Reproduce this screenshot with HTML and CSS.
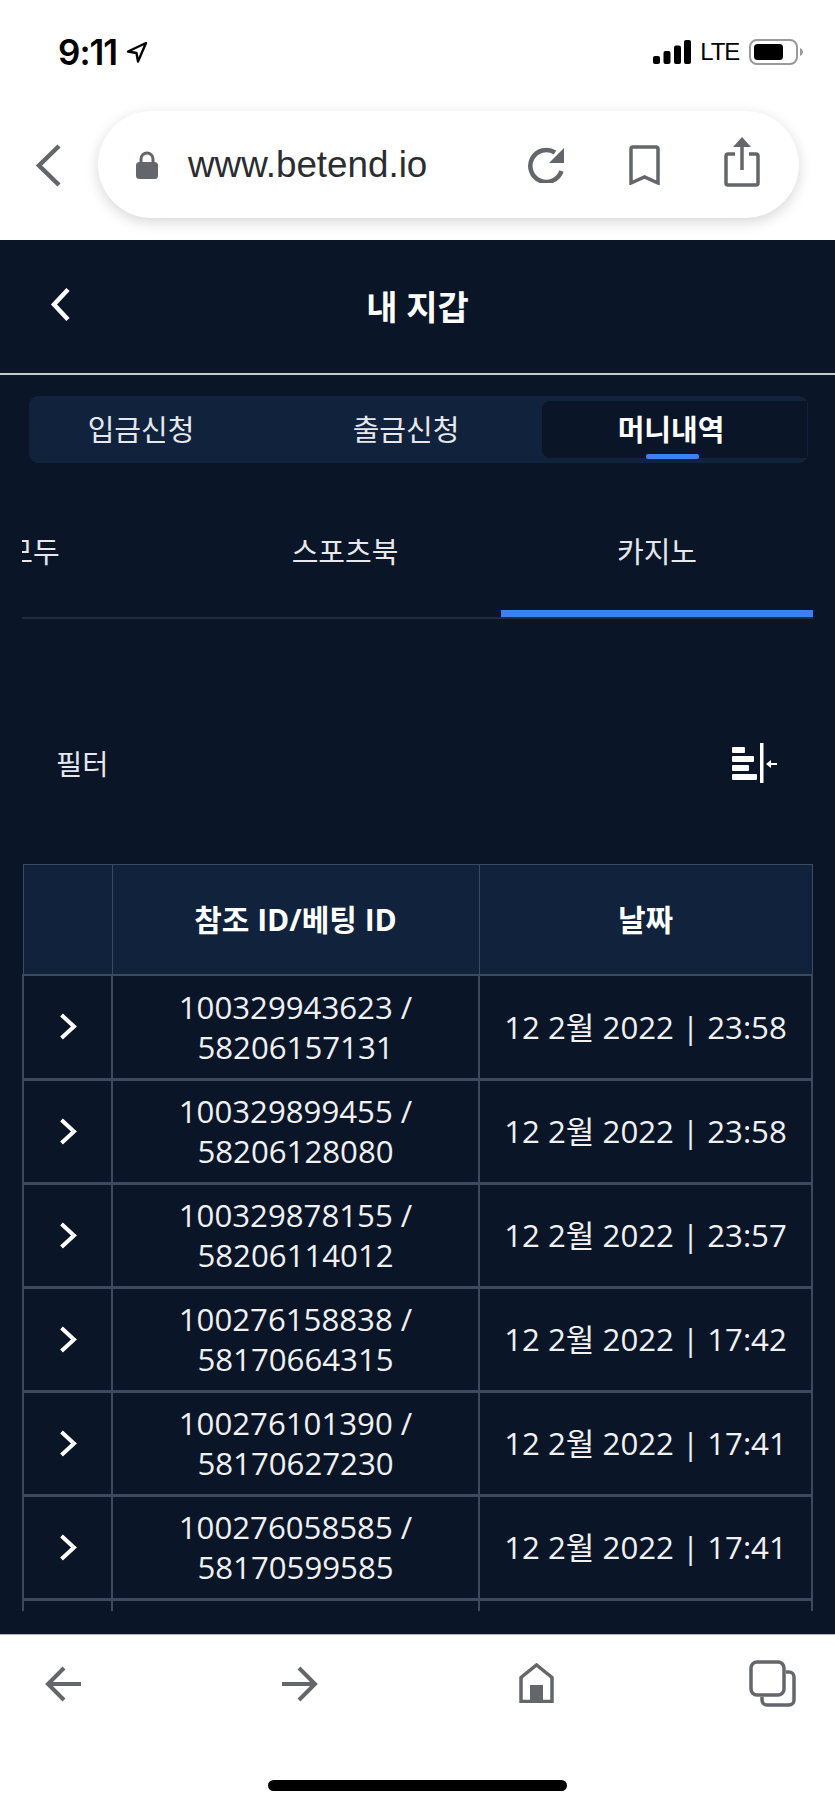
FILE: index.html
```html
<!DOCTYPE html>
<html lang="ko">
<head>
  <meta charset="UTF-8">
  <meta name="viewport" content="width=device-width, initial-scale=1.0">
  <title>내 지갑</title>
  <link rel="stylesheet" href="styles.css">
</head>
<body>
  <div class="phone">
    <!-- 상태바 -->
    <div class="status">
      <div class="status-left">
        <span class="time">9:11</span>
        <svg class="loc" viewBox="0 0 22 22"><path d="M20 2 2 10.5l8.5 1.5L12 20.5z" fill="none" stroke="#000" stroke-width="2.4" stroke-linejoin="round"/></svg>
      </div>
      <div class="status-right">
        <svg class="signal" viewBox="0 0 38 24"><rect x="0" y="16" width="7" height="8" rx="2"/><rect x="10.500" y="11" width="7" height="13" rx="2"/><rect x="21" y="5.500" width="7" height="18.500" rx="2"/><rect x="31" y="0" width="7" height="24" rx="2"/></svg>
        <span class="lte">LTE</span>
        <svg class="battery" viewBox="0 0 54 26"><rect x="1" y="1" width="47" height="24" rx="7" fill="none" stroke="#9a9a9a" stroke-width="2"/><rect x="5" y="5" width="29" height="16" rx="3.500" fill="#000"/><path d="M51 9c2 1 3 2.500 3 4s-1 3-3 4z" fill="#9a9a9a"/></svg>
      </div>
    </div>

    <!-- 브라우저 주소창 -->
    <div class="browser">
      <svg class="browser-back" viewBox="0 0 25 43"><path d="M23 2 3 21.500 23 41" fill="none" stroke="#63666b" stroke-width="4.500"/></svg>
      <div class="url-pill">
        <svg class="lock" viewBox="0 0 22 28"><path d="M5 13V8a6 6 0 0 1 12 0v5" fill="none" stroke="#63666b" stroke-width="3"/><rect x="0" y="11" width="22" height="17" rx="3.500" fill="#63666b"/></svg>
        <span class="url">www.betend.io</span>
        <svg class="ico-reload" viewBox="0 0 36 36"><path d="M33.500 24A16 16 0 1 1 27 5.500" fill="none" stroke="#63666b" stroke-width="4.500"/><path d="M36 1v15H21z" fill="#63666b"/></svg>
        <svg class="ico-mark" viewBox="0 0 31 40"><path d="M2 38V4a2 2 0 0 1 2-2h23a2 2 0 0 1 2 2v34l-13.500-6z" fill="none" stroke="#63666b" stroke-width="3.500"/></svg>
        <svg class="ico-share" viewBox="0 0 36 50"><path d="M11 17H4a2 2 0 0 0-2 2v27a2 2 0 0 0 2 2h28a2 2 0 0 0 2-2V19a2 2 0 0 0-2-2h-7" fill="none" stroke="#63666b" stroke-width="3.500"/><path d="M18 33V3" stroke="#63666b" stroke-width="3.500"/><path d="M18 0l9 10H9z" fill="#63666b"/></svg>
      </div>
    </div>

    <!-- 페이지 -->
    <main class="page">
      <header class="page-head">
        <svg class="page-back" viewBox="0 0 21 35"><path d="M18 2.500 4 17.500l14 15" fill="none" stroke="#fff" stroke-width="4.500"/></svg>
        <h1>내 지갑</h1>
      </header>

      <nav class="wallet-tabs">
        <a class="wallet-tab">입금신청</a>
        <a class="wallet-tab">출금신청</a>
        <a class="wallet-tab active">머니내역</a>
      </nav>

      <nav class="sub-tabs">
        <a class="sub-tab">모두</a>
        <a class="sub-tab">스포츠북</a>
        <a class="sub-tab active">카지노</a>
      </nav>

      <div class="filter">
        <span>필터</span>
        <svg class="ico-filter" viewBox="0 0 45 40"><g fill="#fff"><rect x="0" y="4" width="13" height="6" rx="1"/><rect x="0" y="13" width="22" height="6" rx="1"/><rect x="0" y="22" width="17" height="6" rx="1"/><rect x="0" y="31" width="25" height="6" rx="1"/><rect x="28" y="0" width="3.500" height="40"/><rect x="37" y="20" width="8" height="2"/><path d="M34 21 39 17v8z"/></g></svg>
      </div>

      <div class="table-wrap">
        <table class="history">
          <thead>
            <tr><th></th><th>참조 ID/베팅 ID</th><th>날짜</th></tr>
          </thead>
          <tbody>
            <tr>
              <td><svg class="chev" viewBox="0 0 18 27"><path d="M2.500 2 15 13.500 2.500 25" fill="none" stroke="#fff" stroke-width="4"/></svg></td>
              <td>100329943623 /<br>58206157131</td>
              <td>12 2월 2022 | 23:58</td>
            </tr>
            <tr>
              <td><svg class="chev" viewBox="0 0 18 27"><path d="M2.500 2 15 13.500 2.500 25" fill="none" stroke="#fff" stroke-width="4"/></svg></td>
              <td>100329899455 /<br>58206128080</td>
              <td>12 2월 2022 | 23:58</td>
            </tr>
            <tr>
              <td><svg class="chev" viewBox="0 0 18 27"><path d="M2.500 2 15 13.500 2.500 25" fill="none" stroke="#fff" stroke-width="4"/></svg></td>
              <td>100329878155 /<br>58206114012</td>
              <td>12 2월 2022 | 23:57</td>
            </tr>
            <tr>
              <td><svg class="chev" viewBox="0 0 18 27"><path d="M2.500 2 15 13.500 2.500 25" fill="none" stroke="#fff" stroke-width="4"/></svg></td>
              <td>100276158838 /<br>58170664315</td>
              <td>12 2월 2022 | 17:42</td>
            </tr>
            <tr>
              <td><svg class="chev" viewBox="0 0 18 27"><path d="M2.500 2 15 13.500 2.500 25" fill="none" stroke="#fff" stroke-width="4"/></svg></td>
              <td>100276101390 /<br>58170627230</td>
              <td>12 2월 2022 | 17:41</td>
            </tr>
            <tr>
              <td><svg class="chev" viewBox="0 0 18 27"><path d="M2.500 2 15 13.500 2.500 25" fill="none" stroke="#fff" stroke-width="4"/></svg></td>
              <td>100276058585 /<br>58170599585</td>
              <td>12 2월 2022 | 17:41</td>
            </tr>
            <tr><td></td><td></td><td></td></tr>
          </tbody>
        </table>
      </div>
    </main>

    <!-- 하단 툴바 -->
    <footer class="toolbar">
      <div class="toolbar-icons">
        <svg class="ico-arrow" viewBox="0 0 36 36"><path d="M19 2 3 18l16 16M3 18h33" fill="none" stroke="#63666b" stroke-width="4"/></svg>
        <svg class="ico-arrow forward" viewBox="0 0 36 36"><path d="M17 2l16 16-16 16M33 18H0" fill="none" stroke="#63666b" stroke-width="4"/></svg>
        <svg class="ico-home" viewBox="0 0 35 40"><path d="M2 38.500V14.500L17.500 2 33 14.500v24z" fill="none" stroke="#63666b" stroke-width="3.500"/><rect x="11" y="22" width="13" height="17" fill="#63666b"/></svg>
        <svg class="ico-tabs" viewBox="0 0 47 47"><rect x="2" y="2" width="33" height="33" rx="6" fill="none" stroke="#63666b" stroke-width="3.500"/><path d="M37 12h3a5 5 0 0 1 5 5v23a5 5 0 0 1-5 5H18a5 5 0 0 1-5-5v-3" fill="none" stroke="#63666b" stroke-width="3.500"/></svg>
      </div>
      <div class="home-bar"></div>
    </footer>
  </div>
</body>
</html>
```

FILE: styles.css
```css
html, body, h1, table {
  padding: 0;
  margin: 0;
}

body {
  background: #fff;
  font-family: "Open Sans", "Noto Sans CJK KR", sans-serif;
}

.phone {
  width: 835px;
  height: 1808px;
  display: flex;
  flex-direction: column;
  overflow: hidden;
}

/* status bar */
.status {
  height: 100px;
  flex: none;
  display: flex;
  justify-content: space-between;
  align-items: center;
  padding: 4px 32px 0 58px;
  box-sizing: border-box;
}
.status-left,
.status-right {
  display: flex;
  align-items: center;
}
.time {
  font-family: Inter, sans-serif;
  font-size: 35px;
  font-weight: 600;
  letter-spacing: -1px;
  color: #000;
}
.loc {
  width: 22px;
  height: 22px;
  margin-left: 9px;
}
.signal {
  width: 38px;
  height: 24px;
}
.lte {
  font-family: "Liberation Sans", sans-serif;
  font-size: 24px;
  letter-spacing: -1.2px;
  margin: 0 10px 0 9px;
  color: #000;
}
.battery {
  width: 54px;
  height: 26px;
}

/* browser bar */
.browser {
  height: 140px;
  flex: none;
  display: flex;
  align-items: center;
  padding: 0 36px 0 36px;
  box-sizing: border-box;
}
.browser-back {
  width: 25px;
  height: 43px;
  margin-top: -10px;
  flex: none;
}
.url-pill {
  width: 701px;
  height: 107px;
  margin: -11px 0 0 37px;
  flex: none;
  display: flex;
  align-items: center;
  border-radius: 54px;
  background: #fff;
  box-shadow: 0 4px 14px rgba(0, 0, 0, .16);
  padding-left: 38px;
  box-sizing: border-box;
}
.lock {
  width: 22px;
  height: 28px;
  flex: none;
}
.url {
  font-family: "Liberation Sans", sans-serif;
  font-size: 36.8px;
  color: #2b2d30;
  margin-left: 30px;
  width: 340px;
  white-space: nowrap;
}
.ico-reload { width: 36px; height: 36px; flex: none; }
.ico-mark { width: 31px; height: 40px; margin-left: 65px; flex: none; }
.ico-share { width: 36px; height: 50px; margin-left: 64px; margin-top: -5px; flex: none; }

/* page */
.page {
  height: 1394px;
  flex: none;
  background: #0a1628;
  color: #fff;
  overflow: hidden;
}
.page-head {
  position: relative;
  height: 133px;
  border-bottom: 2px solid #c8c9cb;
  display: flex;
  align-items: center;
  justify-content: center;
}
.page-head h1 {
  font-size: 34px;
  font-weight: 700;
  margin-top: -3px;
}
.page-back {
  position: absolute;
  left: 50px;
  top: 47px;
  width: 21px;
  height: 35px;
}

/* wallet tabs */
.wallet-tabs {
  margin: 21px 27px 0 29px;
  height: 67px;
  background: #11233c;
  border-radius: 9px;
  display: flex;
  justify-content: flex-end;
  align-items: center;
  overflow: hidden;
  padding-right: 1px;
}
.wallet-tab {
  flex: none;
  width: 265px;
  height: 57px;
  line-height: 57px;
  padding-right: 7px;
  box-sizing: border-box;
  text-align: center;
  font-size: 29px;
  color: #e6e8ec;
}
.wallet-tab.active {
  position: relative;
  background: #0a1628;
  border-radius: 8px 0 0 8px;
  font-weight: 700;
  color: #fff;
}
.wallet-tab.active::after {
  content: "";
  position: absolute;
  left: 104px;
  bottom: -1px;
  width: 53px;
  height: 5px;
  border-radius: 2px;
  background: #3b82ee;
}

/* sub tabs */
.sub-tabs {
  margin: 0 22px;
  height: 156px;
  display: flex;
  justify-content: flex-end;
  overflow: hidden;
  box-sizing: border-box;
  border-bottom: 2px solid #1f2c3f;
}
.sub-tab {
  flex: none;
  width: 312px;
  height: 154px;
  padding-top: 69px;
  box-sizing: border-box;
  text-align: center;
  font-size: 29px;
  line-height: 40px;
  color: #e6e8ec;
}
.sub-tab.active {
  border-bottom: 7px solid #3b82ee;
  margin-bottom: -2px;
}

/* filter */
.filter {
  height: 245px;
  padding: 42px 58px 0 56px;
  box-sizing: border-box;
  display: flex;
  justify-content: space-between;
  align-items: center;
  font-size: 28.5px;
  color: #e6e8ec;
}
.ico-filter {
  width: 45px;
  height: 40px;
}

/* table */
.table-wrap {
  margin: 0 22px;
  height: 747px;
  overflow: hidden;
}
.history {
  width: 100%;
  table-layout: fixed;
  border-collapse: collapse;
  font-size: 31.2px;
}
.history th:nth-child(1) { width: 88px; }
.history th:nth-child(2) { width: 366px; }
.history th {
  height: 106px;
  padding: 0 0 3px;
  background: #11233c;
  border: 1px solid #3b4a5e;
  font-size: 30px;
  font-weight: 700;
}
.history td {
  height: 104px;
  padding: 0;
  border: 2px solid #3b4a5e;
  border-bottom-width: 3px;
  text-align: center;
  line-height: 40px;
  color: #f0f1f3;
  box-sizing: border-box;
}
.chev {
  display: block;
  width: 18px;
  height: 27px;
  margin: 0 auto;
}

/* toolbar */
.toolbar {
  flex: 1;
  border-top: 1px solid #b4b6ba;
  box-sizing: border-box;
}
.toolbar-icons {
  height: 145px;
  padding: 25px 39px 0 45px;
  box-sizing: border-box;
  display: flex;
  justify-content: space-between;
  align-items: flex-start;
}
.ico-arrow { width: 36px; height: 36px; margin-top: 6px; }
.ico-arrow.forward { margin-left: 6px; }
.ico-home { width: 35px; height: 40px; margin-top: 3px; margin-left: 6px; }
.ico-tabs { width: 47px; height: 47px; }
.home-bar {
  width: 299px;
  height: 11px;
  margin: 0 auto;
  border-radius: 6px;
  background: #000;
}
```
